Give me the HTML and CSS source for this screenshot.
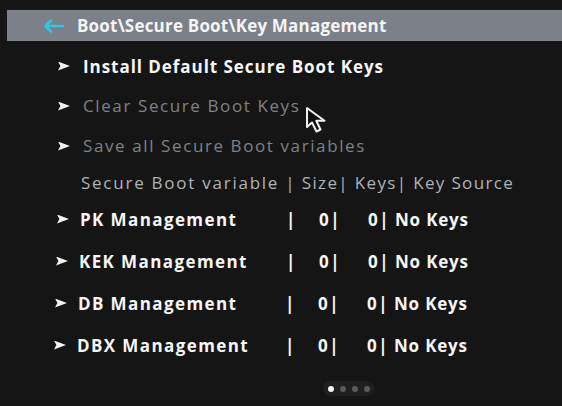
FILE: index.html
```html
<!DOCTYPE html>
<html>
<head>
<meta charset="utf-8">
<link rel="stylesheet" href="styles.css">
</head>
<body>
<div class="screen">
  <header class="titlebar">
    <svg class="back" width="22" height="14" viewBox="0 0 22 14"><path d="M8 1.5 L2.5 7 L8 12.5 M2.5 7 H20" fill="none" stroke="#2ec8e6" stroke-width="2.6" stroke-linecap="round" stroke-linejoin="round"/></svg>
    <span class="title">Boot\Secure Boot\Key Management</span>
  </header>

  <div class="menu">
    <div class="item active"><span class="chev"></span><span>Install Default Secure Boot Keys</span></div>
    <div class="item disabled"><span class="chev"></span><span>Clear Secure Boot Keys</span></div>
    <div class="item disabled"><span class="chev"></span><span>Save all Secure Boot variables</span></div>
    <div class="thead"><span class="th-name">Secure Boot variable </span><span class="th-rest">| Size| Keys| Key Source</span></div>
    <div class="krow r1"><span class="chev"></span><span class="name">PK Management</span><span class="sep">|</span><span class="num">0|</span><span class="num k">0|</span><span class="src">No Keys</span></div>
    <div class="krow r2"><span class="chev"></span><span class="name">KEK Management</span><span class="sep">|</span><span class="num">0|</span><span class="num k">0|</span><span class="src">No Keys</span></div>
    <div class="krow r3"><span class="chev"></span><span class="name">DB Management</span><span class="sep">|</span><span class="num">0|</span><span class="num k">0|</span><span class="src">No Keys</span></div>
    <div class="krow r4"><span class="chev"></span><span class="name">DBX Management</span><span class="sep">|</span><span class="num">0|</span><span class="num k">0|</span><span class="src">No Keys</span></div>
  </div>

  <div class="pager">
    <span class="dot on"></span><span class="dot"></span><span class="dot"></span><span class="dot"></span>
  </div>

  <svg class="cursor" width="26" height="30" viewBox="0 0 26 30"><path d="M2 2 L2 21 L7 16.5 L11.5 25.5 L15.5 23.5 L11.3 14.8 L19.5 14.8 Z" fill="#111" stroke="#f2f2f2" stroke-width="2" stroke-linejoin="round"/></svg>
</div>
</body>
</html>
```

FILE: styles.css
```css
* { box-sizing: border-box; }
html, body { margin: 0; padding: 0; }
body {
  background: #141414;
  font-family: "Open Sans", "DejaVu Sans", sans-serif;
  width: 562px;
  height: 406px;
  overflow: hidden;
}
.screen {
  position: relative;
  width: 562px;
  height: 406px;
  background: #151515;
  padding-top: 10px;
}
.titlebar {
  margin-left: 7px;
  height: 31px;
  background: #7c8089;
  display: flex;
  align-items: center;
  padding-left: 36px;
  gap: 12px;
}
.back { flex: none; }
.title {
  color: #f4f4f4;
  font-weight: 700;
  font-size: 17px;
  letter-spacing: 0.2px;
}
.menu {
  display: flex;
  flex-direction: column;
  margin-top: 5px;
}
.item {
  height: 40px;
  display: flex;
  align-items: center;
  padding-left: 58px;
  font-size: 17px;
}
.item .chev { margin-right: 13px; }
.active { color: #f6f6f6; font-weight: 700; letter-spacing: 0.95px; }
.item.disabled { color: #7d8288; font-weight: 400; letter-spacing: 1.6px; }
.item.disabled span:last-child { position: relative; top: -1px; }
.chev {
  flex: none;
  width: 12px;
  height: 9px;
  background: #f2f2f2;
  clip-path: polygon(0 0, 100% 50%, 0 100%, 20% 50%);
}
.thead {
  height: 32px;
  display: flex;
  align-items: center;
  padding-left: 81px;
  color: #aeb4b8;
  font-size: 17px;
  white-space: pre;
}
.th-name { letter-spacing: 1.75px; }
.th-rest { letter-spacing: 1.35px; }
.krow {
  height: 42px;
  display: flex;
  align-items: center;
  color: #f6f6f6;
  font-weight: 700;
  font-size: 17px;
  letter-spacing: 1.4px;
  padding-left: 57px;
}
.krow.r2 { padding-left: 56px; }
.krow.r3 { padding-left: 55px; }
.krow.r4 { padding-left: 54px; }
.krow .chev { margin-right: 11px; }
.name { width: 206px; flex: none; }
.krow.r2 .name { width: 207px; }
.krow.r3 .name { width: 207px; }
.krow.r4 .name { width: 208px; }
.sep { width: 5px; flex: none; }
.num { width: 50px; text-align: right; flex: none; }
.num.k { width: 49px; }
.src { margin-left: 5px; letter-spacing: 0.8px; }
.pager {
  position: absolute;
  left: 323px;
  top: 381px;
  width: 51px;
  height: 15px;
  border-radius: 8px;
  background: #1f1f1f;
  display: flex;
  align-items: center;
  justify-content: center;
  gap: 6px;
}
.dot { width: 6px; height: 6px; border-radius: 50%; background: #5a5a5a; }
.dot.on { background: #f4f4f4; }
.cursor {
  position: absolute;
  left: 305px;
  top: 106px;
}
```
